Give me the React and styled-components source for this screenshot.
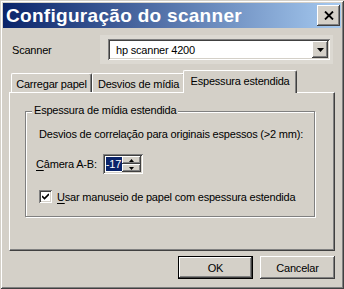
import React from "react";
import styled, { createGlobalStyle, css } from "styled-components";

const GlobalStyle = createGlobalStyle`
  html, body { margin: 0; padding: 0; background: #d4d0c8; }
  body { font-family: "Liberation Sans", Tahoma, sans-serif; font-size: 11px; letter-spacing: -0.2px; color: #000; }
`;

const raised = css`
  box-shadow: inset -1px -1px #404040, inset 1px 1px #fff, inset -2px -2px #808080, inset 2px 2px #d4d0c8;
`;

const sunken = css`
  box-shadow: inset 1px 1px #808080, inset -1px -1px #fff, inset 2px 2px #404040, inset -2px -2px #d4d0c8;
`;

const Window = styled.div`
  width: 344px;
  height: 289px;
  box-sizing: border-box;
  padding: 3px;
  background: #d4d0c8;
  box-shadow: inset 1px 1px #d4d0c8, inset -1px -1px #404040, inset 2px 2px #fff, inset -2px -2px #808080;
  display: flex;
  flex-direction: column;
  white-space: nowrap;
`;

const TitleBar = styled.div`
  height: 25px;
  display: flex;
  align-items: center;
  justify-content: space-between;
  padding: 0 1px 0 3px;
  background: linear-gradient(to right, #0a246a, #a6caf0);
`;

const Title = styled.span`
  color: #fff;
  font-weight: bold;
  font-size: 19px;
  letter-spacing: 0.3px;
`;

const CloseButton = styled.div`
  width: 23px;
  height: 21px;
  background: #d4d0c8;
  ${raised};
  display: flex;
  align-items: center;
  justify-content: center;
`;

const Body = styled.div`
  flex: 1;
  display: flex;
  flex-direction: column;
  padding: 0 6px 0 6px;
`;

const ScannerRow = styled.div`
  display: flex;
  align-items: center;
  margin-top: 7px;
`;

const Label = styled.span`
  width: 88px;
  padding-left: 3px;
`;

const Focus = styled.div`
  background: #dcd9d2;
  padding: 4px 3px 4px 8px;
  width: 233px;
  box-sizing: border-box;
`;

const Select = styled.div`
  height: 21px;
  background: #fff;
  ${sunken};
  display: flex;
  align-items: center;
  justify-content: space-between;
  padding: 2px;
  box-sizing: border-box;
`;

const SelectText = styled.span`
  padding-left: 6px;
`;

const DropButton = styled.div`
  width: 16px;
  height: 17px;
  background: #d4d0c8;
  ${raised};
  display: flex;
  align-items: center;
  justify-content: center;
`;

const Tabs = styled.div`
  margin-top: 6px;
  display: flex;
  align-items: flex-end;
  height: 22px;
  padding-left: 2px;
  position: relative;
  z-index: 1;
`;

const Tab = styled.div`
  width: ${(p) => p.$w}px;
  height: ${(p) => (p.$active ? 23 : 19)}px;
  box-sizing: border-box;
  margin: 0 ${(p) => (p.$active ? -2 : 0)}px;
  display: flex;
  justify-content: center;
  align-items: ${(p) => (p.$active ? "flex-start" : "center")};
  padding-top: ${(p) => (p.$active ? 4 : 1)}px;
  background: #d4d0c8;
  border-top: 1px solid #fff;
  border-left: 1px solid #fff;
  border-right: 1px solid #404040;
  border-radius: 2px 2px 0 0;
  box-shadow: inset -1px 0 #808080;
  margin-bottom: ${(p) => (p.$active ? -1 : 0)}px;
  z-index: ${(p) => (p.$active ? 2 : 1)};
`;

const Panel = styled.div`
  height: 159px;
  box-sizing: border-box;
  border-top: 1px solid #fff;
  border-left: 1px solid #fff;
  border-right: 1px solid #404040;
  border-bottom: 1px solid #404040;
  box-shadow: inset -1px -1px #808080;
  padding: 18px 19px 0 15px;
`;

const Group = styled.fieldset`
  margin: 0;
  min-width: 0;
  padding: 6px 10px 0 14px;
  height: 106px;
  box-sizing: border-box;
  border: none;
  box-shadow: inset 1px 1px #808080, inset -1px -1px #808080, inset 2px 2px #fff, 1px 1px #fff;
  position: relative;
`;

const Legend = styled.div`
  position: absolute;
  top: -7px;
  left: 7px;
  padding: 0 2px;
  background: #d4d0c8;
`;

const Line = styled.div`
  margin-top: ${(p) => p.$top || 0}px;
  display: flex;
  align-items: center;
  margin-left: ${(p) => p.$left || 0}px;
`;

const Mnemonic = styled.span`
  text-decoration: underline;
  text-underline-offset: 2px;
`;

const Spin = styled.div`
  margin-left: 6px;
  width: 40px;
  height: 20px;
  box-sizing: border-box;
  padding: 2px;
  background: #fff;
  ${sunken};
  display: flex;
`;

const SpinEdit = styled.div`
  flex: 1;
  display: flex;
  align-items: center;
  padding-left: 1px;
`;

const Selected = styled.span`
  background: #0a246a;
  color: #fff;
  line-height: 14px;
  padding-right: 1px;
`;

const SpinButtons = styled.div`
  width: 19px;
  display: flex;
  flex-direction: column;
`;

const SpinButton = styled.div`
  flex: 1;
  background: #d4d0c8;
  ${raised};
  display: flex;
  align-items: center;
  justify-content: center;
`;

const CheckRow = styled.div`
  display: flex;
  align-items: center;
  gap: 5px;
  margin-top: 16px;
`;

const CheckBox = styled.div`
  width: 13px;
  height: 13px;
  box-sizing: border-box;
  background: #fff;
  ${sunken};
  display: flex;
  align-items: center;
  justify-content: center;
`;

const Buttons = styled.div`
  display: flex;
  justify-content: flex-end;
  gap: 7px;
  margin-top: 5px;
`;

const Button = styled.div`
  width: 75px;
  height: 23px;
  box-sizing: border-box;
  display: flex;
  align-items: center;
  justify-content: center;
  background: #d4d0c8;
  ${(p) =>
    p.$default
      ? css`
          border: 1px solid #000;
          box-shadow: inset -1px -1px #404040, inset 1px 1px #fff, inset -2px -2px #808080;
        `
      : raised};
`;

const Arrow = ({ down = true, w = 7 }) => (
  <svg width={w} height={Math.ceil(w / 2)} viewBox={`0 0 ${w} ${Math.ceil(w / 2)}`}>
    <polygon
      points={down ? `0,0 ${w},0 ${w / 2},${Math.ceil(w / 2)}` : `0,${Math.ceil(w / 2)} ${w},${Math.ceil(w / 2)} ${w / 2},0`}
      fill="#000"
    />
  </svg>
);

export default function App() {
  return (
    <>
      <GlobalStyle />
      <Window>
        <TitleBar>
          <Title>Configuração do scanner</Title>
          <CloseButton>
            <svg width="10" height="9" viewBox="0 0 10 9">
              <path d="M1 0.5 L9 8.5 M9 0.5 L1 8.5" stroke="#000" strokeWidth="1.8" />
            </svg>
          </CloseButton>
        </TitleBar>
        <Body>
          <ScannerRow>
            <Label>Scanner</Label>
            <Focus>
              <Select>
                <SelectText>hp scanner 4200</SelectText>
                <DropButton>
                  <Arrow w={7} />
                </DropButton>
              </Select>
            </Focus>
          </ScannerRow>
          <Tabs>
            <Tab $w={81}>Carregar papel</Tab>
            <Tab $w={93}>Desvios de mídia</Tab>
            <Tab $w={114} $active>Espessura estendida</Tab>
          </Tabs>
          <Panel>
            <Group>
              <Legend>Espessura de mídia estendida</Legend>
              <Line $top={11}>Desvios de correlação para originais espessos (&gt;2 mm):</Line>
              <Line $top={14} $left={-3}>
                <span>
                  <Mnemonic>C</Mnemonic>âmera A-B:
                </span>
                <Spin>
                  <SpinEdit>
                    <Selected>-17</Selected>
                  </SpinEdit>
                  <SpinButtons>
                    <SpinButton>
                      <Arrow down={false} w={5} />
                    </SpinButton>
                    <SpinButton>
                      <Arrow w={5} />
                    </SpinButton>
                  </SpinButtons>
                </Spin>
              </Line>
              <CheckRow>
                <CheckBox>
                  <svg width="7" height="7" viewBox="0 0 7 7">
                    <path d="M0 3 L2.5 5.5 L7 1" stroke="#000" strokeWidth="1.6" fill="none" />
                  </svg>
                </CheckBox>
                <span>
                  <Mnemonic>U</Mnemonic>sar manuseio de papel com espessura estendida
                </span>
              </CheckRow>
            </Group>
          </Panel>
          <Buttons>
            <Button $default>OK</Button>
            <Button>Cancelar</Button>
          </Buttons>
        </Body>
      </Window>
    </>
  );
}
